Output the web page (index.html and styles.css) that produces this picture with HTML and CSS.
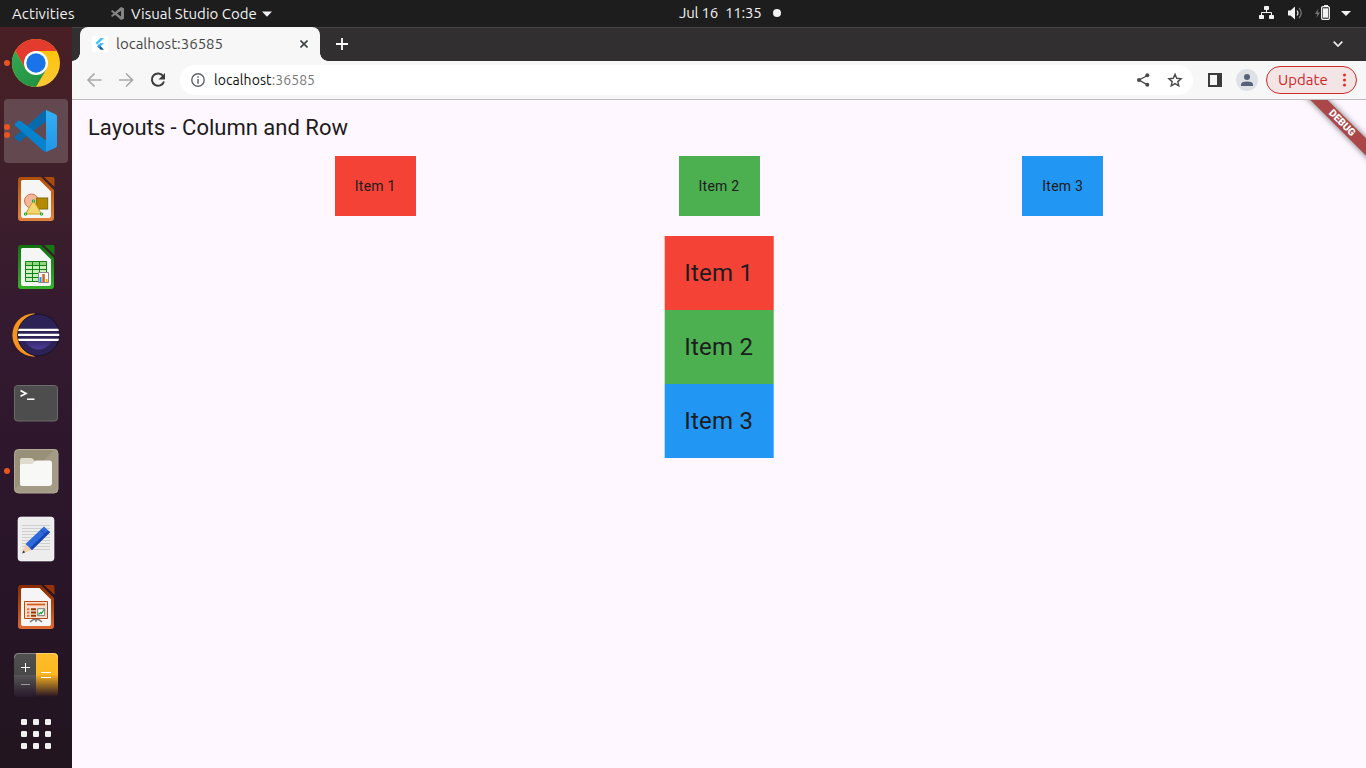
FILE: index.html
```html
<!DOCTYPE html>
<html lang="en">
<head>
<meta charset="utf-8">
<title>localhost:36585</title>
<link rel="stylesheet" href="styles.css">
</head>
<body>
<header class="topbar">
  <span class="activities">Activities</span>
  <svg class="code-logo" width="15" height="15" viewBox="0 0 15 15"><path d="M11 1 14 2.3V12.7L11 14 1 5.3 2.2 4.1 11 10.5ZM11 1V4.7L2.2 11 1 9.8Z" fill="#858585"/></svg>
  <span class="app-name">Visual Studio Code</span>
  <svg class="app-arrow" width="10" height="6" viewBox="0 0 10 6"><path d="M0 .5H10L5 5.8Z" fill="#f2f2f2"/></svg>
  <div class="clock"><span class="date">Jul 16</span><span class="time">11:35</span><i class="notice"></i></div>
  <svg class="tray" width="96" height="27" viewBox="1258 0 96 27">
    <g fill="#f2f2f2"><rect x="1264" y="6" width="5" height="4" rx=".7"/><rect x="1259" y="15" width="5" height="4" rx=".7"/><rect x="1269" y="15" width="5" height="4" rx=".7"/></g>
    <path d="M1266.5 10V12.5M1261.5 15V12.5H1271.5V15" fill="none" stroke="#f2f2f2"/>
    <path d="M1288 10.5H1290.5L1295 6.5V19.5L1290.5 15.5H1288Z" fill="#f2f2f2"/>
    <path d="M1297 10.5Q1299 13 1297 15.5" fill="none" stroke="#e0e0e0" stroke-width="1.2"/>
    <path d="M1299 8Q1303.500 13 1299 18" fill="none" stroke="#777" stroke-width="1.2"/>
    <path d="M1318.500 8.500 1315 14H1317.300L1316.500 18 1320 12.500H1317.500Z" fill="#777"/>
    <path d="M1324 5h4v2h-4z" fill="#f2f2f2"/><rect x="1321.700" y="6.700" width="7.600" height="12.600" rx="1" fill="none" stroke="#f2f2f2" stroke-width="1.300"/><rect x="1323" y="8.300" width="5" height="9.400" fill="#f2f2f2"/>
    <path d="M1341 11H1351L1346 16Z" fill="#f2f2f2"/>
  </svg>
</header>
<div class="desktop">
  <nav class="dock">
    <div class="launcher"><i class="dots one"></i>
      <svg class="icon" viewBox="-32 -32 64 64">
        <defs><linearGradient id="cg" x2="1" y2="1"><stop stop-color="#34a853"/><stop offset="1" stop-color="#1e8e3e"/></linearGradient><linearGradient id="cy" y2="1" x2="0"><stop stop-color="#fcc200"/><stop offset="1" stop-color="#fcc934"/></linearGradient></defs>
        <circle r="24" fill="url(#cy)"/><path d="M-20.800 -12A24 24 0 0 1 20.800 -12H0L-10.400 6Z" fill="#e33b2e"/><path d="M-20.800 -12A24 24 0 0 0 0 24L10.400 6 0 12-10.400 6Z" fill="url(#cg)"/><circle r="12" fill="#fff"/><circle r="9.700" fill="#1a73e8"/>
      </svg></div>
    <div class="launcher active"><i class="dots two"></i>
      <svg class="icon" viewBox="-32 -32 64 64">
        <defs><linearGradient id="vb" y2="1" x2="0"><stop stop-color="#32b1f5"/><stop offset="1" stop-color="#2196e8"/></linearGradient></defs>
        <path d="M10-21V-9.500L-15.500 10Q-17 11-18.300 9.800L-20.700 7.500Q-21.700 6.500-20.700 5.300L7-19.500Z" fill="#0869ad"/>
        <path d="M10 21V9.500L-15.500-10Q-17-11-18.300-9.800L-20.700-7.500Q-21.700-6.500-20.700-5.300L7 19.500Z" fill="#0783ce"/>
        <path d="M10-21 19.500-16.800Q21-16 21-14.500V14.500Q21 16 19.500 16.800L10 21Z" fill="url(#vb)"/>
      </svg></div>
    <div class="launcher">
      <svg class="icon" viewBox="-32 -32 64 64">
        <defs><linearGradient id="do" y2="1" x2="0"><stop stop-color="#ad4e0c"/><stop offset=".5" stop-color="#ce6b1a"/><stop offset="1" stop-color="#e08440"/></linearGradient></defs>
        <path d="M-15-22H5L18-9V19Q18 22 15 22H-15Q-18 22-18 19V-19Q-18-22-15-22Z" fill="url(#do)"/><path d="M-13.500-19H3.500L15-7.500V17Q15 19 13 19H-13Q-15 19-15 17V-17.500Q-15-19-13.500-19Z" fill="#f5f5f5"/><path d="M8-22H17Q18.500-22 18.500-20V-12Z" fill="#a94b0d"/>
        <circle cx="-4.500" cy="2" r="7" fill="#f2b69b" stroke="#d57350"/><rect x=".7" y="-1" width="11" height="11" fill="#b48a00" stroke="#8b6900"/><path d="M-10.500 15 -2.500 1.500 5.500 15Z" fill="#f5d56d" stroke="#caa21f"/><g fill="#fff" stroke="#23a42a"><path d="M-11.500 14h2v2h-2zM4.500 14h2v2h-2zM-3.500 1h2v2h-2z"/></g>
      </svg></div>
    <div class="launcher">
      <svg class="icon" viewBox="-32 -32 64 64">
        <defs><linearGradient id="sg" y2="1" x2="0"><stop stop-color="#11700e"/><stop offset=".5" stop-color="#239120"/><stop offset="1" stop-color="#35b329"/></linearGradient></defs>
        <path d="M-15-22H5L18-9V19Q18 22 15 22H-15Q-18 22-18 19V-19Q-18-22-15-22Z" fill="url(#sg)"/><path d="M-13.500-19H3.500L15-7.500V17Q15 19 13 19H-13Q-15 19-15 17V-17.500Q-15-19-13.500-19Z" fill="#f5f5f5"/><path d="M8-22H17Q18.500-22 18.500-20V-12Z" fill="#177713"/>
        <path d="M-10.500-5.500h21v20h-21z" fill="#c9f0bd"/><path d="M-10.500-5.500h21v4h-21z" fill="#91d77c"/><path d="M-10.500-5.500h21v20h-21zM-10.500-1.500h21M-10.500 2.500h21M-10.500 6.500h21M-10.500 10.500h21M-3.500-5.500v20M3.500-5.500v20" fill="none" stroke="#118016"/><path d="M2.500 5.500h10v10h-10z" fill="#fff" stroke="#888"/><path d="M3.500 10h2v5h-2z" fill="#2196e8"/><path d="M6.300 7h2.500v8H6.300z" fill="#dc5a24"/><path d="M9.700 12h2v3h-2z" fill="#f0c000"/>
      </svg></div>
    <div class="launcher">
      <svg class="icon" viewBox="-32 -32 64 64">
        <defs><linearGradient id="ec" y2="1" x2="0"><stop offset=".55" stop-color="#2c2255"/><stop offset="1" stop-color="#4d3c9a"/></linearGradient><clipPath id="ek"><circle cx="2.500" r="20.800"/></clipPath></defs>
        <path d="M-1.500-21.800C-31-20-31 20-1.500 21.800Z" fill="#f7941e"/>
        <circle cx="2.500" cy="0" r="20.800" fill="#2c2255" stroke="#17102f"/><circle cx="2.500" cy="0" r="14.500" fill="url(#ec)"/><path clip-path="url(#ek)" d="M-18-5.200H24M-18-.2H24M-18 4.800H24" stroke="#fff" stroke-width="2.300"/>
      </svg></div>
    <div class="launcher">
      <svg class="icon" viewBox="-32 -32 64 64">
        <rect x="-21.500" y="-17.500" width="43" height="35.500" rx="3" fill="#4d4d4d" stroke="#6b6b6b"/><path d="M-15.500-12.500-10-9.600-15.500-6.700" fill="none" stroke="#fff" stroke-width="1.700"/><path d="M-9-3.800H-1.500" stroke="#fff" stroke-width="1.500"/>
      </svg></div>
    <div class="launcher"><i class="dots one"></i>
      <svg class="icon" viewBox="-32 -32 64 64">
        <rect x="-21.500" y="-21.500" width="43.500" height="43.500" rx="4" fill="#989078" stroke="#b2ab97"/><path d="M-22 19 19-22Q22-22 22-18V18Q22 22 18 22H-18Z" fill="#aca48f" opacity=".6"/><path d="M-16 0V-11Q-16-13-14-13H-5Q-3.500-13-2.500-11.500L-1-9.500V0Z" fill="#dfdccf"/><path d="M-16 13V-5.500Q-16-7-14-7H-5Q-3.500-7-2.500-8.300L-1.500-9.500Q-1-10.500 1-10.500H13.500Q16-10.500 16-8V12Q16 15 13 15H-13Q-16 15-16 13Z" fill="#f8f8f7"/>
      </svg></div>
    <div class="launcher">
      <svg class="icon" viewBox="-32 -32 64 64">
        <rect x="-18" y="-22" width="36" height="44" rx="3" fill="#ededed" stroke="#fff" stroke-width=".6"/><path d="M-14-13.500H14M-14-10.500H14M-14-7.500H14M-14-4.500H14M-14-1.500H14M-14 1.500H14M-14 4.500H14M-14 7.500H14M-14 10.500H14" stroke="#c6c6c6" stroke-width=".8"/><path d="M-13.800 14.500-10.500 5-4 11Z" fill="#f2cfad"/><path d="M-13.800 14.500-12.700 11.500-10.700 13.200Z" fill="#343434"/><path d="M-10.500 5 8-12.500 14-6.800-4 11Z" fill="#2e69dc"/><path d="M-6 9 12-8.500 14-6.800-4 11Z" fill="#1746ae"/><path d="M4.500-9 10.500-3.500" stroke="#1746ae"/>
      </svg></div>
    <div class="launcher">
      <svg class="icon" viewBox="-32 -32 64 64">
        <defs><linearGradient id="pr" y2="1" x2="0"><stop stop-color="#882b00"/><stop offset=".5" stop-color="#b64512"/><stop offset="1" stop-color="#df6b32"/></linearGradient></defs>
        <path d="M-15-22H5L18-9V19Q18 22 15 22H-15Q-18 22-18 19V-19Q-18-22-15-22Z" fill="url(#pr)"/><path d="M-13.500-19H3.500L15-7.500V17Q15 19 13 19H-13Q-15 19-15 17V-17.500Q-15-19-13.500-19Z" fill="#f5f5f5"/><path d="M8-22H17Q18.500-22 18.500-20V-12Z" fill="#963206"/>
        <path d="M-6 15Q0 9 6 15M0 10V15" fill="none" stroke="#777" stroke-width="1.500"/><path d="M-11.500-5.500h23v17h-23z" fill="#fae1d2" stroke="#b84915"/><path d="M-9-2.500H9" stroke="#d95c20" stroke-width="1.800"/><path d="M-9 2.300h2.500M-9 5.500h2.500M-9 8.700h2.500" stroke="#e0783f" stroke-width="2"/><path d="M-5 2.300H0M-5 5.500H0M-5 8.700H0" stroke="#9b3500" stroke-width="2"/><path d="M1.700 1.700h7v7h-7z" fill="#fff" stroke="#777"/><path d="m2.500 7.500 2-2 1 1 2.500-4" fill="none" stroke="#18a330" stroke-width="1.200"/>
      </svg></div>
    <div class="launcher">
      <svg class="icon" viewBox="-32 -32 64 64">
        <defs><linearGradient id="ky" y2="1" x2="0"><stop stop-color="#fdbc2b"/><stop offset=".48" stop-color="#fdb820"/><stop offset="1" stop-color="#241225"/></linearGradient><linearGradient id="kg" y2="1" x2="0"><stop stop-color="#505050"/><stop offset=".5" stop-color="#484848"/><stop offset=".51" stop-color="#555"/><stop offset="1" stop-color="#27182a"/></linearGradient></defs>
        <path d="M0-22H-18Q-22-22-22-18V18Q-22 22-18 22H0Z" fill="url(#kg)"/><path d="M0-22H18Q22-22 22-18V18Q22 22 18 22H0Z" fill="url(#ky)"/><path d="M-21.500-17Q-21.500-21.500-17-21.500H17Q21.500-21.500 21.500-17" fill="none" stroke="#fff" opacity=".3"/><path d="M-15-7.500h9M-10.500-12v9M5-2.500h10M5 2.500h10" stroke="#fff"/><path d="M-15 9.500h9" stroke="#999"/>
      </svg></div>
    <div class="apps">
      <svg class="icon" viewBox="-32 -32 64 64"><g fill="#f1f0f0"><rect x="-15" y="-15" width="6" height="6" rx="1.300"/><rect x="-3" y="-15" width="6" height="6" rx="1.300"/><rect x="9" y="-15" width="6" height="6" rx="1.300"/><rect x="-15" y="-3" width="6" height="6" rx="1.300"/><rect x="-3" y="-3" width="6" height="6" rx="1.300"/><rect x="9" y="-3" width="6" height="6" rx="1.300"/><rect x="-15" y="9" width="6" height="6" rx="1.300"/><rect x="-3" y="9" width="6" height="6" rx="1.300"/><rect x="9" y="9" width="6" height="6" rx="1.300"/></g></svg>
    </div>
  </nav>
  <section class="browser">
    <div class="tabs">
      <div class="tab">
        <svg width="16" height="16" viewBox="0 0 16 16"><path d="M0 0h16v16H0z" fill="#fff"/><path d="M8.500 2H12L5.200 8.800 3.500 7Z" fill="#42c4f7"/><path d="M8.500 7H12L8.700 10.300 7 8.600Z" fill="#42b7f4"/><path d="M5.300 10.300 7 8.600 10.300 12 12 13.700H8.700Z" fill="#075b9d"/><path d="M5.300 10.300 7 8.600 8.700 10.300 7 12Z" fill="#29a2e4"/></svg>
        <span class="tab-title">localhost:36585</span>
        <svg class="close" width="8" height="8" viewBox="0 0 8 8"><path d="m.5.500 7 7m0-7-7 7" stroke="#3c4043" stroke-width="1.600"/></svg>
      </div>
      <svg class="plus" width="12" height="12" viewBox="0 0 12 12"><path d="M6 0v12M0 6h12" stroke="#fff" stroke-width="1.800"/></svg>
      <svg class="chevron" width="10" height="6" viewBox="0 0 10 6"><path d="m.7.700 4.300 4.300L9.300.7" fill="none" stroke="#eee" stroke-width="1.700"/></svg>
    </div>
    <div class="toolbar">
      <svg class="nav" width="84" height="38" viewBox="84 61 84 38"><path d="M101.500 80H88M94.500 73.500 88 80l6.500 6.500M119 80h13.500M126 73.500l6.500 6.500-6.500 6.500" fill="none" stroke="#aaa" stroke-width="1.700"/><path d="M163.300 76.200A6.200 6.200 0 1 0 164 81.500" fill="none" stroke="#3c3c3c" stroke-width="2"/><path d="M165 73v6.500h-6.500Z" fill="#3c3c3c"/></svg>
      <div class="omnibox">
        <svg width="14" height="14" viewBox="0 0 14 14"><circle cx="7" cy="7" r="6.200" fill="none" stroke="#5f6368" stroke-width="1.400"/><path d="M6.300 3.200h1.500v1.500H6.300zM6.300 6h1.500v4.700H6.300z" fill="#5f6368"/></svg>
        <span class="url">localhost<em>:36585</em></span>
        <svg class="actions" width="48" height="20" viewBox="1136 70 48 20"><path d="M1147.500 75.500 1139 80l8.500 4.800" fill="none" stroke="#4a4a4a" stroke-width="1.400"/><g fill="#4a4a4a"><circle cx="1147.300" cy="75.300" r="2"/><circle cx="1139" cy="80" r="2"/><circle cx="1147.300" cy="84.800" r="2"/></g><path d="m1175 74.300 1.700 4 4.400.4-3.300 2.900 1 4.300-3.800-2.300-3.800 2.300 1-4.300-3.300-2.900 4.400-.4Z" fill="none" stroke="#4a4a4a" stroke-width="1.400"/></svg>
      </div>
      <svg class="panel-icon" width="14" height="14" viewBox="0 0 14 14"><path d="M0 0h14v14H0zM2 2v10h7V2z" fill="#3b3b3b" fill-rule="evenodd"/></svg>
      <svg class="profile" width="22" height="22" viewBox="0 0 22 22"><circle cx="11" cy="11" r="11" fill="#dee1e6"/><circle cx="11" cy="8" r="3" fill="#56627a"/><path d="M5 17v-1.500Q5 12.500 11 12.500t6 3V17Z" fill="#56627a"/></svg>
      <div class="update"><span>Update</span><svg width="3" height="14" viewBox="0 0 3 14"><g fill="#d93025"><circle cx="1.500" cy="2" r="1.500"/><circle cx="1.500" cy="7" r="1.500"/><circle cx="1.500" cy="12" r="1.500"/></g></svg></div>
    </div>
    <main class="page">
      <h1>Layouts - Column and Row</h1>
      <div class="row"><div class="item red">Item 1</div><div class="item green">Item 2</div><div class="item blue">Item 3</div></div>
      <div class="column"><div class="item red">Item 1</div><div class="item green">Item 2</div><div class="item blue">Item 3</div></div>
      <div class="debug"><span>DEBUG</span></div>
    </main>
  </section>
</div>
</body>
</html>
```
FILE: styles.css
```css
* { box-sizing: border-box; }
body { margin: 0; width: 1366px; height: 768px; overflow: hidden; font: 15px/20px "Ubuntu", "Noto Sans", sans-serif; }
svg { display: block; flex: none; }
span { white-space: nowrap; }
.topbar { height: 27px; background: #1d1d1d; color: #f2f2f2; display: flex; align-items: center; padding: 0 12px; position: relative; }
.activities { width: 63px; letter-spacing: .1px; }
.code-logo { margin-left: 35px; }
.app-name { margin-left: 6px; width: 126px; }
.app-arrow { margin-left: 5px; }
.clock { position: absolute; left: 679px; top: 3px; display: flex; align-items: center; letter-spacing: -.2px; }
.date { width: 38px; }
.time { margin-left: 8px; width: 36px; }
.notice { width: 8px; height: 8px; border-radius: 50%; background: #f2f2f2; margin-left: 12px; }
.tray { margin-left: auto; }
.desktop { display: flex; height: 741px; }
.dock { width: 72px; padding: 4px 4px 0; background: linear-gradient(#481f24, #40202a 18%, #341a30 40%, #291529 70%, #21151f); display: flex; flex-direction: column; gap: 4px; }
.launcher { width: 64px; height: 64px; flex: none; position: relative; border-radius: 4px; }
.active { background: #644850; }
.icon { width: 64px; height: 64px; }
.dots { position: absolute; left: 0; width: 6px; height: 6px; border-radius: 50%; background: #e95420; top: 29px; }
.two { top: 25px; box-shadow: 0 8px #e95420; }
.apps { margin-top: -9px; height: 64px; }
.browser { flex: 1; display: flex; flex-direction: column; min-width: 0; }
.tabs { height: 34px; background: #322f30; border-top: 1px solid #474445; display: flex; align-items: center; padding: 0 23px 1px 8px; }
.tab { width: 240px; height: 34px; border-radius: 8px 8px 0 0; background: #f7f7f7; display: flex; align-items: center; padding: 0 12px; position: relative; color: #454746; flex: none; }
.tab::before, .tab::after { content: ""; position: absolute; bottom: 0; width: 8px; height: 8px; }
.tab::before { left: -8px; background: radial-gradient(circle at 0 0, transparent 7.5px, #f7f7f7 8px); }
.tab::after { right: -8px; background: radial-gradient(circle at 100% 0, transparent 7.5px, #f7f7f7 8px); }
.tab-title { margin-left: 8px; }
.close { margin-left: auto; }
.plus { margin-left: 16px; }
.chevron { margin-left: auto; }
.toolbar { height: 39px; background: #f7f7f7; border-bottom: 1px solid #bcbcbc; display: flex; align-items: center; padding: 0 9px 0 12px; }
.omnibox { margin-left: 12px; width: 1014px; height: 30px; border-radius: 15px; background: #fff; display: flex; align-items: center; padding: 0 9px 0 11px; }
.url { margin-left: 9px; color: #111; font-size: 14px; letter-spacing: .08px; }
.url em { font-style: normal; color: #777; }
.actions { margin-left: auto; }
.panel-icon { margin-left: 15px; }
.profile { margin-left: 14px; }
.update { margin-left: 8px; width: 91px; height: 28px; border: 1px solid #d02a26; border-radius: 14px; background: #f3e5e5; color: #cf2525; display: flex; align-items: center; padding: 0 10px 0 11px; justify-content: space-between; }
.page { flex: 1; background: #fef7ff; position: relative; overflow: hidden; font-family: Roboto, sans-serif; color: #1d1b20; }
h1 { height: 56px; margin: 0; padding-left: 16px; font-size: 22px; font-weight: 400; line-height: 56px; }
.row { display: flex; justify-content: space-evenly; font-size: 14px; }
.row .item { width: 81px; height: 60px; padding: 20px; letter-spacing: .25px; white-space: nowrap; }
.column { width: 109px; margin: 20px auto 0; transform: translateX(-.3px); }
.column .item { height: 74px; padding: 20px; font-size: 24px; line-height: 34px; letter-spacing: .25px; white-space: nowrap; }
.red { background: #f44336; }
.green { background: #4caf50; }
.blue { background: #2196f3; }
.debug { position: absolute; right: -36px; top: 17px; width: 120px; height: 12px; transform: rotate(45deg); background: #ab4649; box-shadow: 0 0 6px #0009; color: #fff; font-size: 10.2px; font-weight: 900; line-height: 12px; text-align: center; }
```
